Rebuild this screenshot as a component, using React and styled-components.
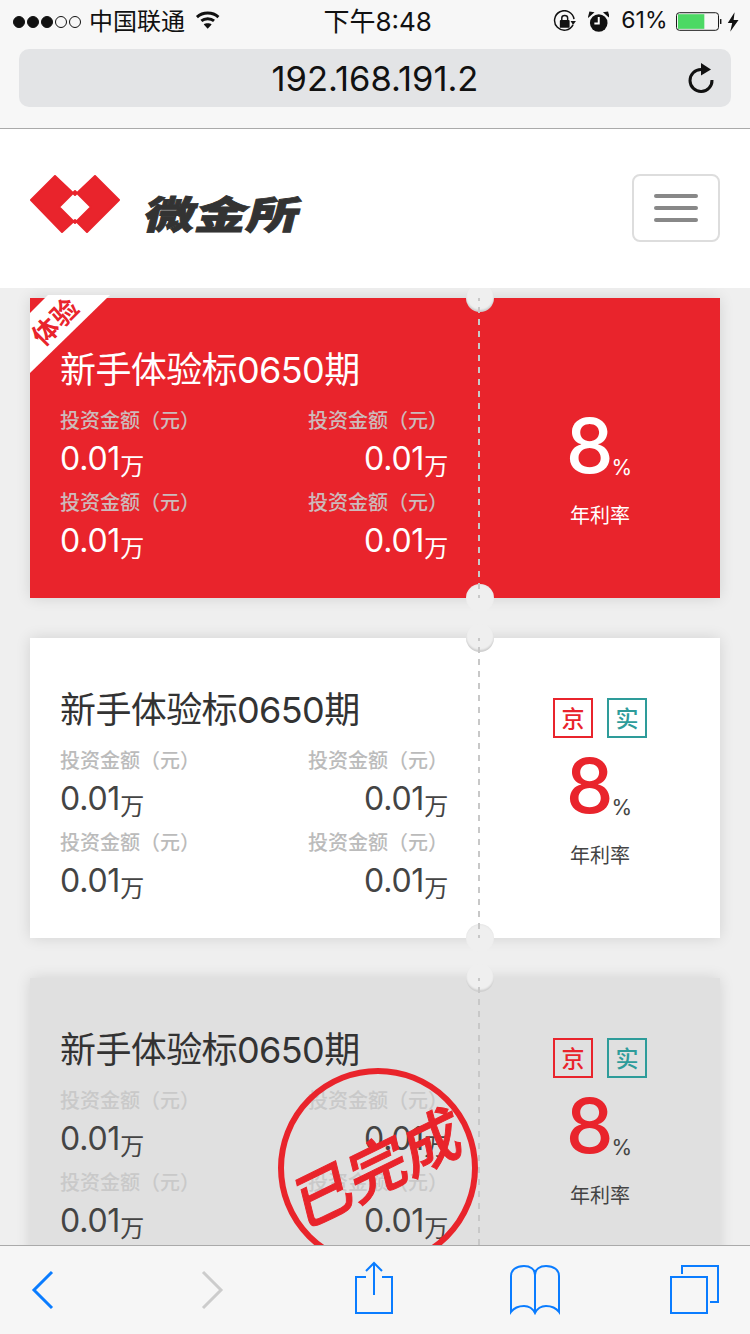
import styled, { createGlobalStyle } from 'styled-components'

const Global = createGlobalStyle`
    html, body {
        margin: 0;
        padding: 0;
        background: #efefef;
        font-family: Inter, "Noto Sans CJK SC", sans-serif;
    }
    * {
        box-sizing: border-box;
    }
`
const Page = styled.div`
    width: 750px;
    height: 1334px;
    display: flex;
    flex-direction: column;
    overflow: hidden;
`
const Browser = styled.div`
    height: 129px;
    background: #f7f7f7;
    border-bottom: 1px solid #aaa;
`
const Status = styled.div`
    height: 49px;
    display: flex;
    align-items: center;
    padding: 0 10px 5px 13px;
    color: #111;
    font-size: 24px;
`
const Signal = styled.div`
    display: flex;
    gap: 2px;
    margin-right: 8px;
`
const Dot = styled.span`
    width: 12px;
    height: 12px;
    border-radius: 50%;
    border: 1px solid #111;
    background: ${p => (p.$on ? '#111' : 'transparent')};
`
const Carrier = styled.span`
    width: 109px;
    margin-bottom: 5px;
    font-size: 24px;
`
const Clock = styled.span`
    width: 340px;
    padding-right: 19px;
    margin-bottom: 5px;
    text-align: center;
    font-size: 26px;
`
const Percent = styled.span`
    margin: 0 8px 4px 12px;
    font-size: 23px;
`
const Address = styled.div`
    margin: 0 19px;
    height: 58px;
    border-radius: 10px;
    background: #e3e4e6;
    display: flex;
    align-items: center;
    justify-content: center;
    position: relative;
    font-size: 34.500px;
    color: #111;
`
const Reload = styled.svg`
    position: absolute;
    right: 14px;
    top: 12px;
`
const Nav = styled.div`
    height: 159px;
    background: #fff;
    display: flex;
    align-items: center;
    justify-content: space-between;
    padding: 0 30px 2px;
`
const Brand = styled.div`
    display: flex;
    align-items: flex-start;
`
const BrandName = styled.span`
    margin-left: 28px;
    margin-top: 20px;
    font-size: 46px;
    line-height: 46px;
    font-weight: 900;
    color: #333;
    -webkit-text-stroke: 1px #333;
    display: inline-block;
    transform-origin: left top;
    transform: skewX(-14deg) scale(1.12, 0.84);
`
const Burger = styled.div`
    width: 88px;
    height: 68px;
    border: 2px solid #ddd;
    border-radius: 8px;
    display: flex;
    flex-direction: column;
    justify-content: center;
    align-items: center;
    gap: 8px;
`
const Bar = styled.span`
    width: 44px;
    height: 4px;
    border-radius: 2px;
    background: #888;
`
const List = styled.div`
    flex: 1;
    min-height: 0;
    overflow: hidden;
    background: #efefef;
    padding: 10px 30px 0;
    display: flex;
    flex-direction: column;
    gap: 40px;
`
const Card = styled.div`
    flex: none;
    height: 300px;
    position: relative;
    display: flex;
    box-shadow: 0 0 14px rgba(0, 0, 0, 0.12);
    background: ${p => (p.$tone === 'red' ? '#e9242c' : p.$tone === 'done' ? '#e0e0e0' : '#fff')};
`
const Notch = styled.span`
    position: absolute;
    left: 436px;
    ${p => (p.$bottom ? 'bottom: -14px;' : 'top: -14px;')}
    width: 28px;
    height: 28px;
    border-radius: 50%;
    background: #efefef;
    box-shadow: inset 0 ${p => (p.$bottom ? '1px 2px rgba(0, 0, 0, 0.04)' : '-2px 2px rgba(0, 0, 0, 0.14)')};
`
const Dash = styled.span`
    position: absolute;
    left: 448px;
    top: 0;
    bottom: 0;
    width: 2px;
    background: repeating-linear-gradient(to bottom, #c8c8c8 0, #c8c8c8 6px, transparent 6px, transparent 12px) 0 9px;
`
const Ribbon = styled.div`
    position: absolute;
    left: 0;
    top: -3px;
    width: 80px;
    height: 78px;
    background: #fff;
    clip-path: polygon(18px 0, 80px 0, 0 78px, 0 18px);
    display: flex;
    align-items: center;
    justify-content: center;
`
const RibbonText = styled.span`
    font-size: 26px;
    font-weight: 700;
    line-height: 26px;
    letter-spacing: 1px;
    color: #e9242c;
    transform: translate(-14px, -12px) rotate(-45deg);
    white-space: nowrap;
`
const Info = styled.div`
    width: 448px;
    padding: 50px 0 0 30px;
`
const Title = styled.div`
    height: 44px;
    line-height: 44px;
    font-size: 36px;
    letter-spacing: -0.600px;
    color: ${p => (p.$light ? '#fff' : '#333')};
`
const Grid = styled.div`
    margin-top: 15px;
    width: 388px;
    display: grid;
    grid-template-columns: 1fr 1fr;
    row-gap: 8px;
`
const Cell = styled.div`
    text-align: ${p => (p.$right ? 'right' : 'left')};
`
const Label = styled.div`
    height: 28px;
    line-height: 28px;
    font-size: 20px;
    font-weight: 500;
    color: ${p => (p.$light ? '#cdbabb' : p.$faint ? '#c9c9c9' : '#bbb')};
`
const Value = styled.div`
    height: 44px;
    margin-top: 2px;
    line-height: 44px;
    font-size: 32px;
    letter-spacing: -0.200px;
    white-space: nowrap;
    color: ${p => (p.$light ? '#fff' : '#444')};
`
const Unit = styled.span`
    font-size: 24px;
    vertical-align: -5px;
`
const Rate = styled.div`
    flex: 1;
    padding: 60px 0 0 2px;
    display: flex;
    flex-direction: column;
    align-items: center;
`
const Badges = styled.div`
    height: 40px;
    display: flex;
    gap: 14px;
`
const Badge = styled.span`
    width: 40px;
    height: 40px;
    border: 2px solid ${p => p.$color};
    color: ${p => p.$color};
    font-size: 23px;
    font-weight: 500;
    line-height: 38px;
    text-align: center;
`
const Number = styled.div`
    margin: 7px 2px 0 0;
    height: 80px;
    line-height: 80px;
    font-size: 76px;
    font-weight: 500;
    color: ${p => (p.$light ? '#fff' : '#e9242c')};
`
const Sign = styled.span`
    margin-left: -2px;
    font-size: 21px;
    font-weight: 400;
    position: relative;
    top: 2px;
    color: ${p => (p.$light ? '#fff' : '#444')};
`
const RateLabel = styled.div`
    margin-top: 17px;
    height: 28px;
    line-height: 28px;
    font-size: 20px;
    color: ${p => (p.$light ? '#fff' : '#444')};
`
const Stamp = styled.div`
    position: absolute;
    left: 248px;
    top: 90px;
    width: 200px;
    height: 200px;
    border: 6px solid #e9242b;
    border-radius: 50%;
    display: flex;
    align-items: center;
    justify-content: center;
`
const StampText = styled.span`
    font-size: 60px;
    font-weight: 500;
    line-height: 60px;
    color: #e9242b;
    -webkit-text-stroke: 1px #e9242b;
    white-space: nowrap;
    transform: rotate(-26deg) skewX(-12deg);
`
const Toolbar = styled.div`
    position: relative;
    z-index: 2;
    height: 89px;
    flex: none;
    margin-top: -33px;
    background: #f6f6f6;
    border-top: 1px solid #aaa;
    padding-top: 15px;
    display: flex;
`
const Tool = styled.svg`
    flex: none;
    margin-left: ${p => p.$gap}px;
    fill: none;
    stroke: ${p => (p.$off ? '#ccc' : '#0a7cff')};
    stroke-width: ${p => (p.$thick ? 3 : 2)};
`

const Logo = () => (
    <svg width="92" height="62" viewBox="30 174 92 62">
        <path
            fillRule="evenodd"
            fill="#e9242c"
            stroke="#e9242c"
            strokeWidth="2"
            strokeLinejoin="round"
            d="M31 199 L55 175 L75 194 L95 175 L119 199 L87 231 L75 219 L62 231 Z M75 190 L59 206 L75 222 L91 206 Z"
        />
    </svg>
)

const Wifi = () => (
    <svg width="26" height="20" viewBox="0 0 26 20" fill="none" stroke="#111" strokeWidth="3" style={{ marginTop: -4 }}>
        <path d="M2 7 C8 1.500 18 1.500 24 7" />
        <path d="M6.500 11 C10 8 16 8 19.500 11" />
        <path d="M13 19 L9 14.500 C11 13 15 13 17 14.500 Z" fill="#111" stroke="none" />
    </svg>
)

const RotateLock = () => (
    <svg width="24" height="24" viewBox="0 0 24 24" fill="none" stroke="#111" strokeWidth="1.500">
        <path d="M20.500 15 A10 10 0 1 1 21.500 9" />
        <path d="M18 11 L23.500 11 L20.500 15 Z" fill="#111" stroke="none" />
        <rect x="7" y="10" width="10" height="8" rx="1" fill="#111" stroke="none" />
        <path d="M9 10 V8 C9 4.500 15 4.500 15 8 V10" />
    </svg>
)

const Alarm = () => (
    <svg width="22" height="22" viewBox="0 0 22 22" style={{ marginLeft: 11 }}>
        <circle cx="11" cy="12" r="9" fill="#111" />
        <path d="M11 6 V12.500 H6.500" fill="none" stroke="#fff" strokeWidth="2" />
        <path d="M1 5 L5 1.500 L2 1 Z M21 5 L17 1.500 L20 1 Z" fill="#111" stroke="#111" strokeWidth="1.500" />
    </svg>
)

const Battery = () => (
    <svg width="66" height="22" viewBox="0 0 66 22">
        <rect x="0.500" y="1.500" width="43" height="18" rx="3" fill="none" stroke="#111" />
        <rect x="2" y="3" width="27" height="15" fill="#4cd964" />
        <path d="M45 8 H46.500 V13 H45 Z" fill="#111" />
        <path d="M60 1 L53 12 H57.500 L55.500 21 L64 9 H59 Z" fill="#111" />
    </svg>
)

const Refresh = () => (
    <Reload width="30" height="34" viewBox="0 0 30 34" fill="none">
        <path d="M25 19 A11 11 0 1 1 14 8.500" stroke="#111" strokeWidth="3" />
        <path d="M14 2 L24 8.500 L14 14.500 Z" fill="#111" />
    </Reload>
)

const Money = ({ light, faint, right }) => (
    <Cell $right={right}>
        <Label $light={light} $faint={faint}>投资金额（元）</Label>
        <Value $light={light}>0.01<Unit>万</Unit></Value>
    </Cell>
)

const Ticket = ({ tone, children }) => {
    const light = tone === 'red'
    const faint = tone === 'done'
    return (
        <Card $tone={tone}>
            <Notch />
            <Notch $bottom />
            <Dash />
            <Info>
                <Title $light={light}>新手体验标0650期</Title>
                <Grid>
                    <Money light={light} faint={faint} />
                    <Money light={light} faint={faint} right />
                    <Money light={light} faint={faint} />
                    <Money light={light} faint={faint} right />
                </Grid>
            </Info>
            <Rate>
                <Badges>
                    {!light && <Badge $color="#e9242c">京</Badge>}
                    {!light && <Badge $color="#2e9c9a">实</Badge>}
                </Badges>
                <Number $light={light}>8<Sign $light={light}>%</Sign></Number>
                <RateLabel $light={light}>年利率</RateLabel>
            </Rate>
            {children}
        </Card>
    )
}

const App = () => {
    return (
        <Page>
            <Global />
            <Browser>
                <Status>
                    <Signal>
                        <Dot $on />
                        <Dot $on />
                        <Dot $on />
                        <Dot />
                        <Dot />
                    </Signal>
                    <Carrier>中国联通</Carrier>
                    <Wifi />
                    <Clock>下午8:48</Clock>
                    <RotateLock />
                    <Alarm />
                    <Percent>61%</Percent>
                    <Battery />
                </Status>
                <Address>
                    192.168.191.2
                    <Refresh />
                </Address>
            </Browser>
            <Nav>
                <Brand>
                    <Logo />
                    <BrandName>微金所</BrandName>
                </Brand>
                <Burger>
                    <Bar />
                    <Bar />
                    <Bar />
                </Burger>
            </Nav>
            <List>
                <Ticket tone="red">
                    <Ribbon>
                        <RibbonText>体验</RibbonText>
                    </Ribbon>
                </Ticket>
                <Ticket tone="plain" />
                <Ticket tone="done">
                    <Stamp>
                        <StampText>已完成</StampText>
                    </Stamp>
                </Ticket>
            </List>
            <Toolbar>
                <Tool $gap={18} $thick width="50" height="60" viewBox="0 0 50 60">
                    <path d="M34 11 L16 29 L34 47" />
                </Tool>
                <Tool $gap={119} $off $thick width="50" height="60" viewBox="0 0 50 60">
                    <path d="M16 11 L34 29 L16 47" />
                </Tool>
                <Tool $gap={112} width="50" height="60" viewBox="0 0 50 60">
                    <path d="M17 16 H7 V52 H43 V16 H33" />
                    <path d="M25 34 V2 M17 10 L25 2 L33 10" />
                </Tool>
                <Tool $gap={111} width="50" height="60" viewBox="0 0 50 60">
                    <path d="M25 14 V52" />
                    <path d="M25 14 C25 8 20 5 14 5 C6 5 1 9 1 15 V51 C4 47 9 45 14 45 C19 45 23 48 25 52 C27 48 31 45 36 45 C41 45 46 47 49 51 V15 C49 9 44 5 36 5 C30 5 25 8 25 14" />
                </Tool>
                <Tool $gap={109} width="50" height="60" viewBox="0 0 50 60">
                    <rect x="2" y="16" width="36" height="36" />
                    <path d="M13 13 V5 H49 V41 H41" />
                </Tool>
            </Toolbar>
        </Page>
    )
}

export default App
